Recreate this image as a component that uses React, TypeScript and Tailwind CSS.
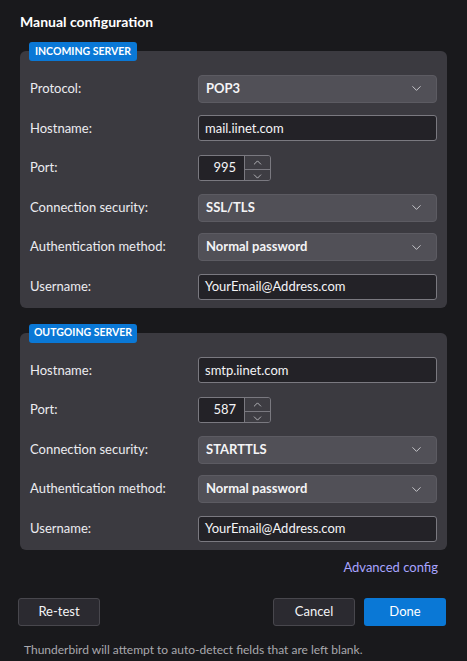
import { ChevronDown, ChevronUp } from "lucide-react";

type Field =
  | { kind: "select"; label: string; value: string }
  | { kind: "text"; label: string; value: string }
  | { kind: "port"; label: string; value: string };

const incoming: Field[] = [
  { kind: "select", label: "Protocol:", value: "POP3" },
  { kind: "text", label: "Hostname:", value: "mail.iinet.com" },
  { kind: "port", label: "Port:", value: "995" },
  { kind: "select", label: "Connection security:", value: "SSL/TLS" },
  { kind: "select", label: "Authentication method:", value: "Normal password" },
  { kind: "text", label: "Username:", value: "YourEmail@Address.com" },
];

const outgoing: Field[] = [
  { kind: "text", label: "Hostname:", value: "smtp.iinet.com" },
  { kind: "port", label: "Port:", value: "587" },
  { kind: "select", label: "Connection security:", value: "STARTTLS" },
  { kind: "select", label: "Authentication method:", value: "Normal password" },
  { kind: "text", label: "Username:", value: "YourEmail@Address.com" },
];

function Control({ field }: { field: Field }) {
  if (field.kind === "select") {
    return (
      <div className="h-[28px] w-full flex items-center justify-between pl-[7px] pr-[12px] rounded-[4px] bg-[#515057] border border-[#5c5b62] text-[#f4f4f6] font-bold">
        <span>{field.value}</span>
        <ChevronDown size={15} strokeWidth={1.3} className="text-[#e0e0e4]" />
      </div>
    );
  }
  if (field.kind === "port") {
    return (
      <div className="h-[26px] w-[73px] flex rounded-[3px] border border-[#7a7980] overflow-hidden">
        <div className="w-[45px] bg-[#232227] flex items-center justify-end pr-[8px] text-[#f4f4f6]">
          {field.value}
        </div>
        <div className="flex-1 flex flex-col border-l border-[#7a7980] bg-[#3e3d43]">
          <div className="flex-1 flex items-center justify-center border-b border-[#7a7980]">
            <ChevronUp size={13} strokeWidth={1.3} className="text-[#e0e0e4]" />
          </div>
          <div className="flex-1 flex items-center justify-center">
            <ChevronDown size={13} strokeWidth={1.3} className="text-[#e0e0e4]" />
          </div>
        </div>
      </div>
    );
  }
  return (
    <div className="h-[26px] w-full flex items-center px-[6px] rounded-[3px] bg-[#232227] border border-[#7a7980] text-[#f4f4f6]">
      {field.value}
    </div>
  );
}

function Section({ title, fields }: { title: string; fields: Field[] }) {
  return (
    <div className="flex flex-col">
      <div className="relative z-10 self-start ml-[9px] -mb-[10px] h-[19px] w-[108px] flex items-center justify-center rounded-[3px] bg-[#0a78d6] text-white text-[10.5px] font-bold">
        {title}
      </div>
      <div className="rounded-[6px] bg-[#3b3a40] pt-[18px] pb-[1px] pl-[10px] pr-[10px]">
        {fields.map((f, i) => (
          <div key={i} className="grid grid-cols-[168px_1fr] items-center h-[39.6px]">
            <span className="text-[#ececf0]">{f.label}</span>
            <Control field={f} />
          </div>
        ))}
      </div>
    </div>
  );
}

export default function App() {
  return (
    <div
      className="w-[467px] h-[661px] bg-[#19191c] text-[13px] overflow-hidden"
      style={{ fontFamily: 'Lato, "Noto Sans", sans-serif' }}
    >
      <div className="px-[20px] pt-[12px]">
        <h1 className="text-[14px] leading-[20px] font-bold text-white mb-[10px]">
          Manual configuration
        </h1>
        <Section title="INCOMING SERVER" fields={incoming} />
        <div className="h-[16px]" />
        <Section title="OUTGOING SERVER" fields={outgoing} />
        <div className="flex justify-end pr-[9px] mt-[8px]">
          <span className="text-[#a8a4ff] leading-[18px]">Advanced config</span>
        </div>
      </div>
      <div className="flex items-center pl-[18px] pr-[21px] mt-[22px]">
        <button className="h-[28px] w-[82px] rounded-[3px] bg-[#2b2a30] border border-[#48474d] text-[#f4f4f6]">
          Re-test
        </button>
        <div className="flex-1" />
        <button className="h-[28px] w-[82px] rounded-[3px] bg-[#2b2a30] border border-[#48474d] text-[#f4f4f6]">
          Cancel
        </button>
        <button className="h-[28px] w-[82px] ml-[9px] rounded-[3px] bg-[#0a78d6] text-white">
          Done
        </button>
      </div>
      <p className="px-[24px] mt-[15px] text-[12px] text-[#a9a9ae]">
        Thunderbird will attempt to auto-detect fields that are left blank.
      </p>
    </div>
  );
}
